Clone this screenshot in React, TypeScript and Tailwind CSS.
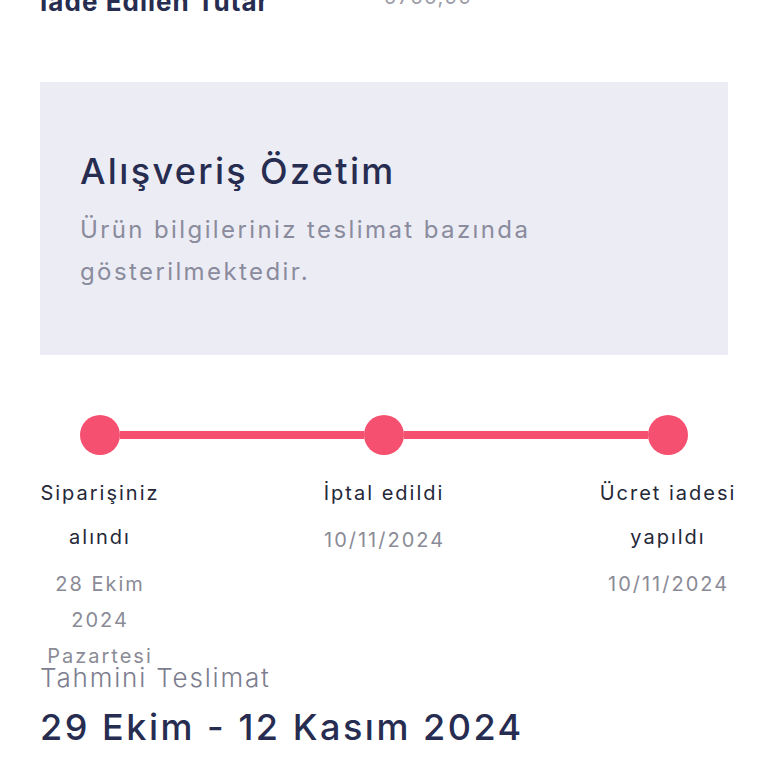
import React from "react";

type Step = {
  title: string;
  date: string;
};

const steps: Step[] = [
  { title: "Siparişiniz alındı", date: "28 Ekim 2024 Pazartesi" },
  { title: "İptal edildi", date: "10/11/2024" },
  { title: "Ücret iadesi yapıldı", date: "10/11/2024" },
];

const Dot = () => <div className="h-10 w-10 shrink-0 rounded-full bg-[#f5506f]" />;
const Bar = () => <div className="h-2 flex-1 bg-[#f5506f]" />;

const App: React.FC = () => {
  return (
    <div
      className="min-h-screen overflow-hidden bg-white px-10"
      style={{ fontFamily: "Inter, 'Noto Sans', sans-serif" }}
    >
      {/* Refund row, scrolled partly off screen */}
      <div className="-mt-[14px] grid grid-cols-2">
        <div className="text-[26px] font-bold leading-[32px] tracking-[0.04em] text-[#272c51]">İade Edilen Tutar</div>
        <div className="-mt-[5px] text-[20px] leading-[32px] tracking-[0.08em] text-[#9a9aa6]">5755,99</div>
      </div>

      {/* Summary card */}
      <div className="mt-[64px] h-[273px] bg-[#ececf4] px-10 pt-[67px]">
        <h2 className="text-[36px] font-medium leading-[44px] tracking-[0.065em] text-[#272c51]">Alışveriş Özetim</h2>
        <p className="mt-4 text-[24px] leading-[42px] tracking-[0.1em] text-[#8a8b9c]">
          Ürün bilgileriniz teslimat bazında gösterilmektedir.
        </p>
      </div>

      {/* Timeline */}
      <div className="mt-[60px] flex items-center px-10">
        <Dot />
        <Bar />
        <Dot />
        <Bar />
        <Dot />
      </div>
      <div className="mt-4 flex h-[190px] justify-between">
        {steps.map((s, i) => (
          <div key={i} className="w-[120px] shrink-0 text-center">
            <div className="-mx-4 text-[20px] leading-[44px] tracking-[0.1em] text-[#252838]">
              <span className="inline-block w-[150px]">{s.title}</span>
            </div>
            <div className="mt-[7px] text-[20px] leading-[36px] tracking-[0.1em] text-[#8a8b96]">{s.date}</div>
          </div>
        ))}
      </div>

      {/* Estimated delivery */}
      <div className="text-[26px] font-light leading-[34px] tracking-[0.07em] text-[#7c7d8e]">Tahmini Teslimat</div>
      <div className="mt-[10px] text-[36px] font-medium leading-[44px] tracking-[0.07em] text-[#272c51]">
        29 Ekim - 12 Kasım 2024
      </div>
    </div>
  );
};

export default App;
